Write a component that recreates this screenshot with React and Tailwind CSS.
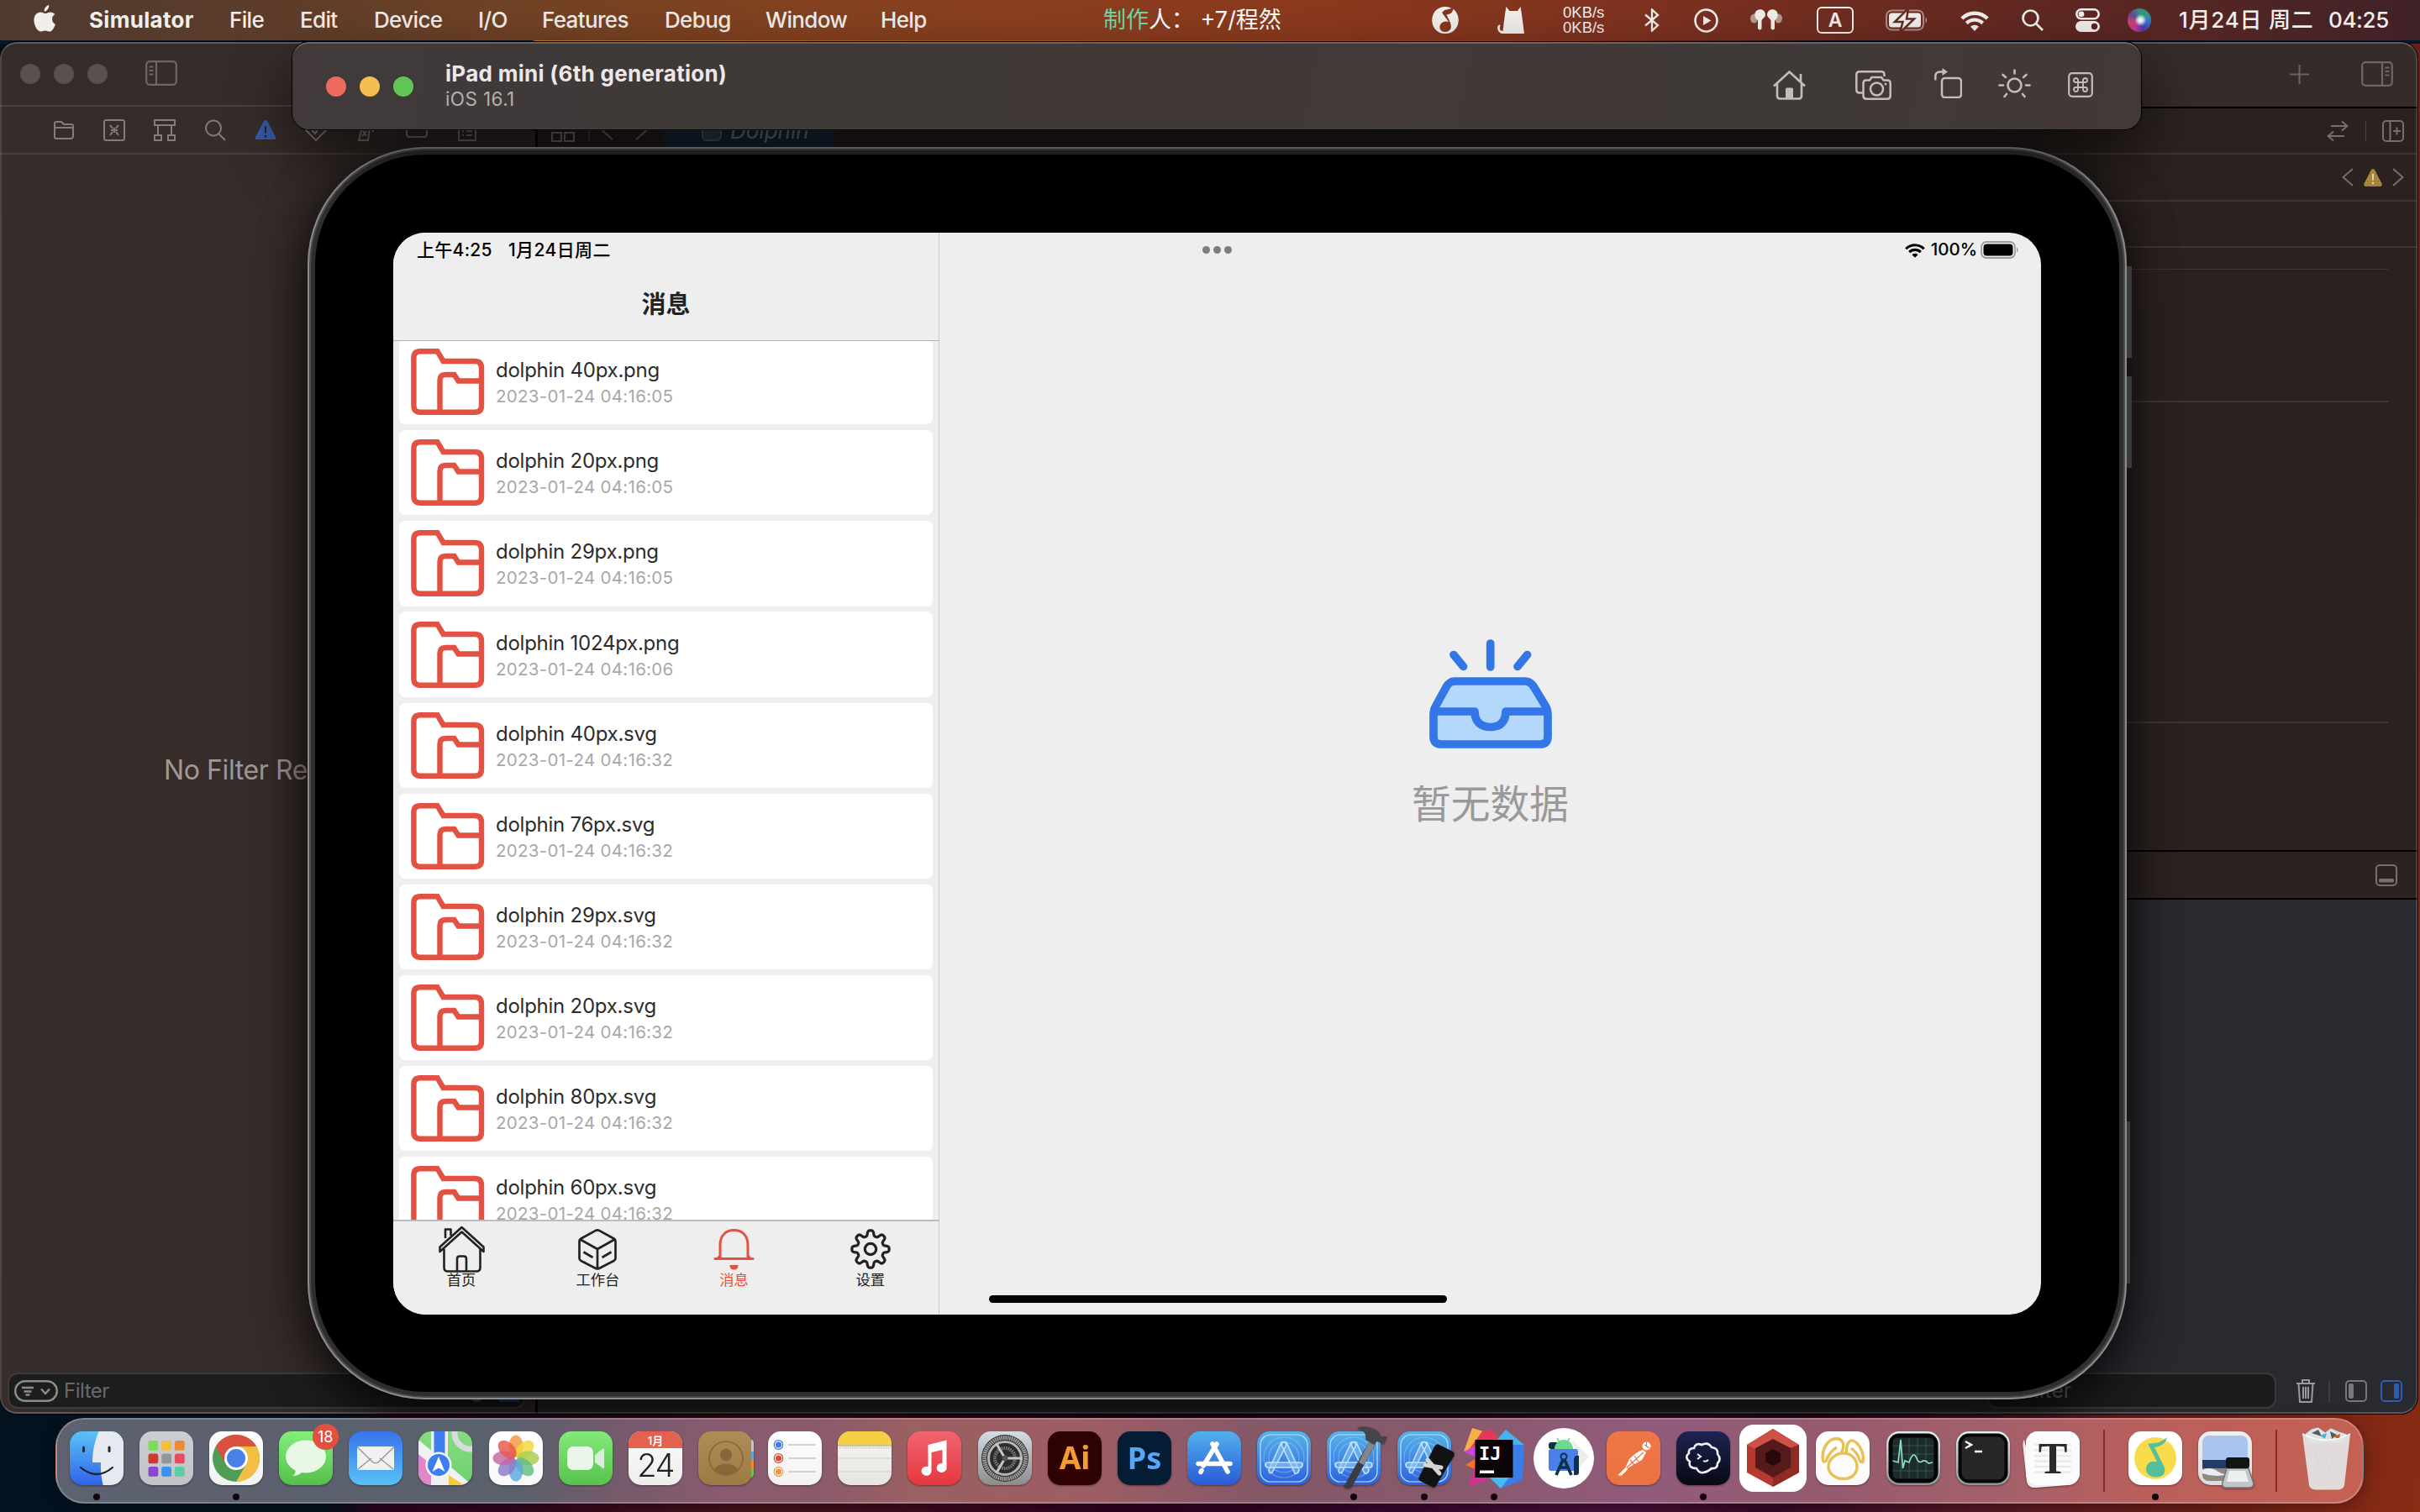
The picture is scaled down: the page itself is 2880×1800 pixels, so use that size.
import React from "react";

/* ---------- menu bar ---------- */

const menus = [
  ["Simulator", "w-[167px] font-bold tracking-[0.3px]"],
  ["File", "w-[84px]"],
  ["Edit", "w-[88px]"],
  ["Device", "w-[124px]"],
  ["I/O", "w-[76px]"],
  ["Features", "w-[146px]"],
  ["Debug", "w-[120px]"],
  ["Window", "w-[137px]"],
  ["Help", "w-[265px]"],
];

function Wifi({ className }) {
  return (
    <svg viewBox="0 0 34 25" className={className} fill="none" stroke="currentColor" strokeWidth="4.4">
      <path d="M1.8 10 A21.5 21.5 0 0 1 32.2 10" />
      <path d="M7.4 15.6 A13.6 13.6 0 0 1 26.6 15.6" />
      <path d="M17 25 L12 19.8 A7 7 0 0 1 22 19.8 Z" fill="currentColor" stroke="none" />
    </svg>
  );
}

function MenuBar() {
  return (
    <header className="relative flex h-12 items-center bg-[linear-gradient(90deg,#503a31_0%,#5b3c2a_10%,#6f4226_20%,#83421f_32%,#8b3f1f_42%,#8c391d_55%,#7e3220_68%,#682a21_80%,#522524_92%,#3f2128_100%)] text-[26px] font-medium text-[#f1eeec]">
      <svg viewBox="0 0 26 32" className="mb-1 ml-10 h-8 w-[26px]" fill="currentColor">
        <path d="M18.2 0 C18.5 2.3 17.5 4.3 16.3 5.7 C15.1 7.1 13.4 7.9 12.7 7.6 C12.4 5.5 13.4 3.6 14.5 2.3 C15.6 1 17 .2 18.2 0 Z M25.3 11 C23.2 12.4 22 14.4 22.1 16.9 C22.2 19.9 23.9 22 26 22.9 C25.2 25.2 22.4 31.6 19 31.6 C16.9 31.6 16.2 30.4 13.7 30.4 C11.2 30.4 10.3 31.6 8.4 31.6 C4.6 31.6 .4 24.3 .4 18 C.4 11.9 4.3 8.5 8.1 8.5 C10.6 8.5 12 10.1 14 10.1 C15.8 10.1 17.2 8.4 19.9 8.4 C21.9 8.4 24.2 9.5 25.3 11 Z" />
      </svg>
      <nav className="mb-0.5 ml-10 flex tracking-[-0.65px]">
        {menus.map(([label, cls]) => (
          <span key={label} className={cls}>{label}</span>
        ))}
      </nav>
      <div className="w-[391px] text-[27px] font-normal whitespace-nowrap text-white">
        <span className="text-[#6bdba5]">制作</span>人：&nbsp;+7/程然
      </div>
      <svg viewBox="0 0 32 32" className="h-8 w-8" fill="currentColor">
        <path d="M16 0 C19 0 21.5 .7 23.5 2 L15 4 L12 7 L20 18 C14 16 9 20 9.5 25 C10 31 20 32 22.5 26 C24.5 20 18 12 17.5 9.5 C21 9.5 25 7 25.5 2.8 C37 12 32 32 16 32 C-5 32 -5 0 16 0 Z" />
      </svg>
      <svg viewBox="0 0 32 32" className="ml-[46px] h-8 w-8" fill="currentColor">
        <path d="M10.5 0 L14.5 5 H24 L27.5 0 L29 9 L32 32 H5 C-1 30 -1 22 2.5 21.5 C5 22 1.5 24 3.5 28 L6.5 29 L9 9 Z" />
      </svg>
      <div className="ml-[46px] flex w-[97px] flex-col font-['Liberation_Sans'] text-[18.5px] leading-[18px] font-normal">
        <span>0KB/s</span>
        <span>0KB/s</span>
      </div>
      <svg viewBox="0 0 18 28" className="h-7 w-[18px]" fill="none" stroke="currentColor" strokeWidth="2.3">
        <path d="M1 7.5 L16 20 L9 26.5 V1.5 L16 8 L1 20.5" />
      </svg>
      <svg viewBox="0 0 29 29" className="ml-[41px] h-[29px] w-[29px]" fill="none" stroke="currentColor" strokeWidth="2.6">
        <circle cx="14.5" cy="14.5" r="13" />
        <path d="M11 9 L20.5 14.5 L11 20 Z" fill="currentColor" stroke="none" />
      </svg>
      <svg viewBox="0 0 38 26" className="ml-[38px] h-[26px] w-[38px]" fill="currentColor">
        <ellipse cx="4.5" cy="11" rx="4.5" ry="5.5" opacity=".55" />
        <ellipse cx="33.5" cy="11" rx="4.5" ry="5.5" opacity=".55" />
        <path d="M7 2 C12 -2 18 1 18 7 C17.5 10 14 11 13.5 14 V23 Q11 26 9 23 V13 C5 11 4 6 7 2 Z" />
        <path d="M31 2 C26 -2 20 1 20 7 C20.5 10 24 11 24.5 14 V23 Q27 26 29 23 V13 C33 11 34 6 31 2 Z" />
      </svg>
      <div className="ml-[41px] flex h-8 w-11 items-center justify-center rounded-[6px] border-[2.5px] border-current text-[23px] font-semibold">A</div>
      <svg viewBox="0 0 51 26" className="ml-[38px] h-[26px] w-[51px]">
        <rect x="1" y="1.5" width="44" height="23" rx="6.5" fill="none" stroke="#f1eeec" strokeOpacity=".5" strokeWidth="2" />
        <path d="M47.5 9 Q51 13 47.5 17 Z" fill="#f1eeec" fillOpacity=".5" />
        <rect x="4" y="4.5" width="38" height="17" rx="3.5" fill="#f1eeec" />
        <path d="M27 -1 L11 15 H20.5 L17 28 L34 11.5 H25 Z" fill="#f1eeec" stroke="#642a22" strokeWidth="2.5" />
      </svg>
      <Wifi className="ml-[38px] h-[25px] w-[34px]" />
      <svg viewBox="0 0 26 26" className="ml-[39px] h-[26px] w-[26px]" fill="none" stroke="currentColor" strokeWidth="2.7">
        <circle cx="10.5" cy="10.5" r="9" />
        <path d="M17 17 L25 25" />
      </svg>
      <svg viewBox="0 0 29 28" className="ml-[38px] h-7 w-[29px]">
        <rect x="1.3" y="1.3" width="26.4" height="11" rx="5.5" fill="none" stroke="#f1eeec" strokeWidth="2.6" />
        <circle cx="7" cy="6.8" r="3.4" fill="#f1eeec" />
        <rect x="0" y="15" width="29" height="13" rx="6.5" fill="#f1eeec" />
        <circle cx="22.5" cy="21.5" r="3.7" fill="#56261f" />
      </svg>
      <div className="ml-[33px] h-7 w-7 rounded-full bg-[radial-gradient(circle_at_55%_50%,#fff_0%,#cfe4ee_14%,transparent_34%),conic-gradient(from_0deg,#3b8f74,#2c9c8a,#3a6fd0,#4a3aa8,#b53a90,#d1406f,#5a4a9a,#3b8f74)]" />
      <div className="mb-0.5 ml-[33px] flex whitespace-nowrap">
        <span className="w-[178px] tracking-[0.75px]">1月24日 周二</span>
        <span className="tracking-[-0.4px]">04:25</span>
      </div>
    </header>
  );
}

/* ---------- Xcode window behind the simulator ---------- */

function PanelIcon({ side }) {
  return (
    <svg viewBox="0 0 38 30" className="h-[30px] w-[38px]" fill="none" stroke="#6f6765" strokeWidth="2.2">
      <rect x="1.2" y="1.2" width="35.6" height="27.6" rx="4" />
      {side === "left" ? (
        <path d="M13 1 V29 M4.5 7.5 H9.5 M4.5 12 H9.5 M4.5 16.5 H9.5" />
      ) : (
        <path d="M25 1 V29 M28.5 7.5 H33.5 M28.5 12 H33.5 M28.5 16.5 H33.5" />
      )}
    </svg>
  );
}

const navIcons = [
  <path d="M2 22 V5 Q2 3 4 3 H10 L13 6 H22 Q24 6 24 8 V20 Q24 23 21 23 H4 Q2 23 2 21 M2 10 H24" />,
  <path d="M1 3 Q1 1 3 1 H23 Q25 1 25 3 V23 Q25 25 23 25 H3 Q1 25 1 23 Z M8 7 L11 11 M18 7 L15 11 M8 19 L11 15 M18 19 L15 15 M9 13 H17 M13 10 V16" />,
  <path d="M1 1 H25 V7 H1 Z M5 7 V19 M21 7 V19 M1 19 H9 V25 H1 Z M17 19 H25 V25 H17 Z" />,
  <path d="M20 10.5 A9 9 0 1 1 2 10.5 A9 9 0 1 1 20 10.5 M17 17 L25 25" />,
  <g stroke="none">
    <path d="M13 1 Q14.5 1 15.5 3 L25 21 Q26 24 23.5 24 H2.5 Q0 24 1 21 L10.5 3 Q11.5 1 13 1 Z" fill="#3459a4" />
    <path d="M11.8 8 H14.2 L13.8 17 H12.2 Z M11.7 19 H14.3 V21.5 H11.7 Z" fill="#2a2425" />
  </g>,
  <path d="M13 1 L25 13 L13 25 L1 13 Z M8 13 L12 17 L18 8" />,
  <path d="M8 9 H17 L15 25 H4 Z M10 9 V3 H16 M9 14 L13 20 M13 14 L8 20 M20 6 H22 M24 10 H26 M20 14 H22" />,
  <path d="M1 5 H25 V18 Q25 21 22 21 H4 Q1 21 1 18 Z" />,
  <path d="M3 1 H23 V25 H3 Z M7 8 H9 M12 8 H19 M7 14 H9 M12 14 H19 M7 19 H9 M12 19 H19" />,
];

function Chevron({ dir }) {
  return (
    <svg viewBox="0 0 14 22" className="h-[22px] w-[14px]" fill="none" stroke="#766f6d" strokeWidth="2">
      {dir === "left" ? <path d="M13 1 L1.5 11 L13 21" /> : <path d="M1 1 L12.5 11 L1 21" />}
    </svg>
  );
}

function XcodeWindow() {
  return (
    <section className="absolute top-[50px] left-0 flex h-[1633px] w-[2877px] overflow-hidden rounded-[20px] bg-[#2b2220] ring-1 ring-black">
      <aside className="flex w-[637px] flex-col bg-[#362c2a]">
        <div className="flex h-[77px] items-center border-b-2 border-[#4b403e] pl-6">
          <div className="flex gap-4">
            <i className="h-6 w-6 rounded-full bg-[#5a504e]" />
            <i className="h-6 w-6 rounded-full bg-[#5a504e]" />
            <i className="h-6 w-6 rounded-full bg-[#5a504e]" />
          </div>
          <div className="mb-0.5 ml-[45px]">
            <PanelIcon side="left" />
          </div>
        </div>
        <div className="flex h-[57px] items-center gap-[34px] border-b-2 border-[#4b403e] pl-[63px]">
          {navIcons.map((g, i) => (
            <svg key={i} viewBox="0 0 26 26" className="h-[26px] w-[26px] shrink-0" fill="none" stroke="#857c7a" strokeWidth="2">
              {g}
            </svg>
          ))}
        </div>
        <div className="flex h-[1450px] items-center pl-[195px]">
          <span className="mt-[16px] text-[32px] tracking-[-0.4px] whitespace-nowrap text-[#a09896]">No Filter Results</span>
        </div>
        <div className="ml-[9px] flex h-[43px] w-[616px] items-center rounded-[12px] border-2 border-[#403c3b] bg-[#1d1d1d] pl-1.5">
          <svg viewBox="0 0 52 26" className="h-[26px] w-[52px]" fill="none" stroke="#8d8d8d" strokeWidth="2.4">
            <rect x="1.2" y="1.2" width="49.6" height="23.6" rx="11.8" />
            <path d="M9 9 H23 M11.5 13.5 H20.5 M13.5 17.5 H18.5 M32 10.5 L37 16 L42 10.5" />
          </svg>
          <span className="ml-[7px] text-[24px] tracking-[-0.5px] text-[#6a6a6a]">Filter</span>
          <i className="mt-3 ml-[430px] h-3.5 w-3.5 rounded-full bg-[#555]" />
          <i className="mt-3 ml-5 h-3.5 w-6 bg-[#243f7c]" />
        </div>
      </aside>
      <i className="w-[3px] bg-black" />
      <main className="flex flex-1 flex-col">
        <div className="flex h-[79px] items-center justify-end border-b-2 border-black bg-[#352b29] pr-[29px]">
          <svg viewBox="0 0 22 22" className="h-[23px] w-[23px]" stroke="#6b6361" strokeWidth="2">
            <path d="M11 0 V22 M0 11 H22" />
          </svg>
          <div className="mb-0.5 ml-[62px]">
            <PanelIcon side="right" />
          </div>
        </div>
        <div className="flex h-[55px] items-center border-b-2 border-[#403634] pl-4">
          <svg viewBox="0 0 28 26" className="h-[26px] w-7" fill="none" stroke="#857c7a" strokeWidth="2">
            <path d="M1 1 H12 V11 H1 Z M16 1 H27 V11 H16 Z M1 15 H12 V25 H1 Z M16 15 H27 V25 H16 Z" />
          </svg>
          <i className="ml-4 h-6 w-[2px] bg-[#4b403e]" />
          <div className="ml-[14px] flex gap-[26px]">
            <Chevron dir="left" />
            <Chevron dir="right" />
          </div>
          <div className="ml-[19px] flex h-[55px] w-[204px] items-center bg-[#1a2b41] pl-[46px] text-[26px] text-[#81868d] italic">
            <i className="mr-2.5 h-6 w-6 rounded-md border-2 border-[#5d6670] bg-[#3a4450]" />
            Dolphin
          </div>
          <svg viewBox="0 0 26 26" className="ml-auto h-[26px] w-[26px]" fill="none" stroke="#766f6d" strokeWidth="2">
            <path d="M5 7 H24 M18 1.5 L24.5 7 L18 12.5 M21 19 H2 M8 13.5 L1.5 19 L8 24.5" />
          </svg>
          <i className="ml-5 h-6 w-px bg-[#4b4341]" />
          <svg viewBox="0 0 26 26" className="mr-[16px] ml-[19px] h-[26px] w-[26px]" fill="none" stroke="#766f6d" strokeWidth="2">
            <rect x="1" y="1" width="24" height="24" rx="4" />
            <path d="M9.5 1 V25 M13 13 H22 M17.5 8.5 V17.5" />
          </svg>
        </div>
        <div className="flex h-14 items-center justify-end gap-3 border-b-2 border-[#403634] pr-4">
          <Chevron dir="left" />
          <svg viewBox="0 0 22 21" className="h-[21px] w-[22px]">
            <path d="M11 0 Q12.5 0 13.5 2 L21.5 17.5 Q22.5 21 19.5 21 H2.5 Q-.5 21 .5 17.5 L8.5 2 Q9.5 0 11 0 Z" fill="#a8833a" />
            <path d="M10 6 H12 L11.7 14 H10.3 Z M10 16 H12 V18 H10 Z" fill="#e6dccb" />
          </svg>
          <Chevron dir="right" />
        </div>
        <div className="h-[55px] border-b-2 border-[#403634]" />
        <div className="mr-[35px] h-[26px] border-b border-[#403634]" />
        <div className="mr-[35px] h-[158px] border-b-2 border-[#403634]" />
        <div className="mr-[35px] h-[382px] border-b-2 border-[#403634]" />
        <div className="h-[151px]" />
        <div className="flex h-[59px] items-center justify-end border-y-2 border-black bg-[#2c2221] pr-[24px]">
          <svg viewBox="0 0 26 26" className="h-[26px] w-[26px]" fill="none" stroke="#766f6d" strokeWidth="2">
            <rect x="1" y="1" width="24" height="24" rx="4" />
            <rect x="4" y="17" width="18" height="4.5" rx="1.5" fill="#766f6d" stroke="none" />
          </svg>
        </div>
        <div className="flex flex-1 items-end justify-end bg-[#292a2f] pr-[18px] pb-1.5">
          <div className="mr-[24px] flex h-[43px] w-[344px] items-center rounded-[12px] border-2 border-[#3a3a3c] bg-[#1c1c1c] pl-[12px] text-[25px] text-[#6a6a6a]">
            <i className="mr-[7px] h-5 w-5 rounded-full border-2 border-[#6a6a6a]" />
            Filter
          </div>
          <svg viewBox="0 0 22 28" className="mb-[7px] h-7 w-[22px]" fill="none" stroke="#9a9a9c" strokeWidth="2">
            <path d="M0 5 H22 M7 5 V1 H15 V5 M2.5 5 L4 27 H18 L19.5 5 M8 9 V23 M11 9 V23 M14 9 V23" />
          </svg>
          <i className="mb-2 ml-4 h-[25px] w-0.5 bg-[#3c3d42]" />
          <svg viewBox="0 0 26 26" className="mb-2 ml-[18px] h-[26px] w-[26px]" fill="none" stroke="#77787b" strokeWidth="2">
            <rect x="1" y="1" width="24" height="24" rx="4" />
            <rect x="4" y="4" width="6" height="18" rx="2" fill="#77787b" stroke="none" />
          </svg>
          <svg viewBox="0 0 26 26" className="mb-2 ml-4 h-[26px] w-[26px]" fill="none" stroke="#2f5cb0" strokeWidth="2">
            <rect x="1" y="1" width="24" height="24" rx="4" />
            <rect x="16" y="4" width="6" height="18" rx="2" fill="#2f5cb0" stroke="none" />
          </svg>
        </div>
      </main>
      <div className="pointer-events-none absolute inset-0 rounded-[20px] border-2 border-[#ffffff38] border-x-[#ffffff20]" />
    </section>
  );
}

/* ---------- simulator title bar ---------- */

function SimulatorBar() {
  return (
    <section className="absolute top-[50px] left-[348px] flex h-[104px] w-[2200px] items-center rounded-[20px] border-t-2 border-[#6a6462] bg-[linear-gradient(100deg,#41393a_0%,#3f3938_30%,#423938_60%,#3f3a37_80%,#433937_100%)] pl-10 shadow-[0_30px_70px_rgba(0,0,0,0.6),0_0_0_1px_#000]">
      <div className="flex gap-4">
        <i className="h-6 w-6 rounded-full bg-[#ed6a5e]" />
        <i className="h-6 w-6 rounded-full bg-[#f5bf4f]" />
        <i className="h-6 w-6 rounded-full bg-[#61c554]" />
      </div>
      <div className="ml-[38px] flex flex-col whitespace-nowrap">
        <span className="text-[26px] leading-[30px] font-bold tracking-[0.3px] text-[#ebe8e7]">iPad mini (6th generation)</span>
        <span className="text-[22.5px] leading-[30px] tracking-[0.4px] text-[#b5afad]">iOS 16.1</span>
      </div>
      <div className="mr-[57px] mb-1 ml-auto flex items-center text-[#c4bdbb]">
        <svg viewBox="0 0 39 35" className="h-[35px] w-[39px]" fill="none" stroke="currentColor" strokeWidth="2.6">
          <path d="M1 18.5 L19.5 1.5 L38 18.5 M5 15 V30 Q5 33.5 8.5 33.5 H30.5 Q34 33.5 34 30 V15 M33 14 V4" />
          <path d="M15 33 V22 Q15 20.5 16.5 20.5 H22.5 Q24 20.5 24 22 V33 Z" fill="currentColor" stroke="none" />
        </svg>
        <svg viewBox="0 0 43 35" className="ml-[59px] h-[35px] w-[43px]" fill="none" stroke="currentColor" strokeWidth="2.5">
          <path d="M9 26.5 H5 Q1.3 26.5 1.3 22.5 V5 Q1.3 1.3 5 1.3 H31 Q34.5 1.3 34.5 5 V7" />
          <path d="M13 11.5 H17 L19.5 8 H31 L33.5 11.5 H38 Q41.7 11.5 41.7 15 V30 Q41.7 33.7 38 33.7 H13 Q9.5 33.7 9.5 30 V15 Q9.5 11.5 13 11.5 Z" />
          <circle cx="25.5" cy="22" r="7.5" />
          <circle cx="36" cy="16" r="1.5" fill="currentColor" stroke="none" />
        </svg>
        <svg viewBox="0 0 33 36" className="mb-1 ml-[51px] h-9 w-[33px]" fill="none" stroke="currentColor" strokeWidth="2.5">
          <rect x="9" y="12" width="23" height="23" rx="3.5" />
          <path d="M1.3 14.5 V10 Q1.3 4.5 7 4.5 H13" />
          <path d="M9.5 0 L16 4.5 L9.500 9 Z" fill="currentColor" stroke="none" />
        </svg>
        <svg viewBox="0 0 39 35" className="mb-1 ml-[43px] h-[35px] w-[39px]" fill="none" stroke="currentColor" strokeWidth="2.6" strokeLinecap="round">
          <circle cx="19.5" cy="19.5" r="8" />
          <path d="M19.5 1.5 V5.5 M1.5 19.5 H6 M33 19.5 H37.5 M5.5 7 L9 10 M33.5 7 L30 10 M7.5 33 L10 30 M31.5 33 L29 30" />
        </svg>
        <svg viewBox="0 0 30 30" className="ml-11 h-[30px] w-[30px]" fill="none" stroke="currentColor" strokeWidth="2.2">
          <rect x="1.2" y="1.2" width="27.6" height="27.6" rx="4" />
          <path d="M12 12 H18 V18 H12 Z M12 12 V9.500 A2.5 2.5 0 1 0 9.500 12 H12 M18 12 V9.500 A2.5 2.5 0 1 1 20.5 12 H18 M12 18 V20.5 A2.5 2.5 0 1 1 9.5 18 H12 M18 18 V20.5 A2.5 2.5 0 1 0 20.5 18 H18" strokeWidth="1.9" />
        </svg>
      </div>
    </section>
  );
}

/* ---------- app running in the iPad ---------- */

const files = [
  ["dolphin 40px.png", "2023-01-24 04:16:05"],
  ["dolphin 20px.png", "2023-01-24 04:16:05"],
  ["dolphin 29px.png", "2023-01-24 04:16:05"],
  ["dolphin 1024px.png", "2023-01-24 04:16:06"],
  ["dolphin 40px.svg", "2023-01-24 04:16:32"],
  ["dolphin 76px.svg", "2023-01-24 04:16:32"],
  ["dolphin 29px.svg", "2023-01-24 04:16:32"],
  ["dolphin 20px.svg", "2023-01-24 04:16:32"],
  ["dolphin 80px.svg", "2023-01-24 04:16:32"],
  ["dolphin 60px.svg", "2023-01-24 04:16:32"],
];

function FolderIcon() {
  return (
    <svg viewBox="0 0 88 79" className="h-[79px] w-[88px] shrink-0" fill="none" stroke="#e25141" strokeWidth="6.4">
      <path d="M3.4 11 Q3.4 3.2 11 3.2 H31.5 L38.5 15 H76 Q84 15 84 23 V68 Q84 75.8 76 75.8 H11 Q3.4 75.8 3.4 68 Z" />
      <path d="M34.5 75 V38 Q34.5 31 41 31 H51.5 L56.5 38.5 H84" />
    </svg>
  );
}

const gearPath = (() => {
  const pts = [];
  for (let i = 0; i < 240; i++) {
    const a = (i / 240) * Math.PI * 2;
    const r = 19 + 3.3 * Math.tanh(1.9 * Math.cos(8 * a));
    pts.push(`${(24 + r * Math.sin(a)).toFixed(2)} ${(24 - r * Math.cos(a)).toFixed(2)}`);
  }
  return `M${pts.join(" L")} Z`;
})();

const tabs = [
  [
    "首页",
    <svg viewBox="0 0 55 56" className="mt-[5px] h-[56px] w-[55px]" fill="none" stroke="currentColor" strokeWidth="2.6" strokeLinejoin="round">
      <path d="M8 15 V4.5 H14.5 V12" />
      <path d="M27.5 2 L53.5 25.5 V31 L27.5 7.5 L1.5 31 V25.5 Z" />
      <path d="M6.5 28 V50 Q6.5 54.500 11 54.500 H45 Q49.5 54.500 49.5 50 V28" />
      <path d="M22 54 V39.5 Q22 36.5 25 36.5 H30 Q33 36.5 33 39.5 V54" />
    </svg>,
  ],
  [
    "工作台",
    <svg viewBox="0 0 46 49" className="mt-[9px] mb-[3px] h-[49px] w-[46px]" fill="none" stroke="currentColor" strokeWidth="2.7" strokeLinejoin="round">
      <path d="M21 1.9 Q23 1 25 1.9 L42.5 11.5 Q44.5 12.5 44.5 14.5 V35 Q44.5 37 42.5 38 L25 47 Q23 48 21 47 L3.5 38 Q1.5 37 1.5 35 V14.5 Q1.5 12.5 3.5 11.5 Z M2.5 12.5 L23 24 L43.5 12.5 M23 24 V47.5 M6.5 27.5 L17.5 34 M28.5 34 L39.5 27.5" />
    </svg>,
  ],
  [
    "消息",
    <svg viewBox="0 0 49 49" className="mt-[9px] mb-[3px] h-[49px] w-[49px]" fill="none" stroke="currentColor" strokeWidth="3" strokeLinecap="round">
      <path d="M2 35.5 H47 M8 34 V19 C8 8 14.5 1.6 24.5 1.6 C34.5 1.6 41 8 41 19 V34 M8 32 L5.5 35 M41 32 L43.5 35" />
      <path d="M19.5 43 H29.5 Q29.5 48.5 24.5 48.5 Q19.5 48.5 19.5 43 Z" fill="currentColor" stroke="none" />
    </svg>,
  ],
  [
    "设置",
    <svg viewBox="0 0 48 48" className="mt-[9px] mb-[4px] h-[48px] w-[48px]" fill="none" stroke="currentColor" strokeWidth="3.2">
      <path d={gearPath} />
      <circle cx="24" cy="24" r="6.7" />
    </svg>,
  ],
];

function Sidebar() {
  return (
    <aside className="flex w-[650px] flex-col border-r border-[#c9c9c9]">
      <header className="relative z-10 flex h-[129px] flex-col border-b border-[#b4b4b4] bg-[#eeeeee]">
        <div className="flex h-[41px] items-center pl-[28px] font-medium whitespace-nowrap text-black">
          <span className="w-[109px] text-[21px] tracking-[0.3px]">上午4:25</span>
          <span className="text-[21px] tracking-[0.4px]">1月24日周二</span>
        </div>
        <h1 className="mt-[23px] text-center text-[29px] leading-[44px] font-bold text-[#222]">消息</h1>
      </header>
      <ul className="-mt-0.5 flex h-[1048px] flex-col gap-[6.9px] overflow-hidden px-[7px]">
        {files.map(([name, date], i) => (
          <li key={i} className="flex h-[101.25px] shrink-0 items-center rounded-[7px] bg-white pl-[13.5px]">
            <FolderIcon />
            <div className="ml-[13.5px] flex flex-col pt-[3px]">
              <span className="text-[24px] leading-[31px] tracking-[-0.25px] text-[#2c2c2c]">{name}</span>
              <span className="text-[20.5px] leading-[31px] tracking-[0.3px] text-[#a8a8a8]">{date}</span>
            </div>
          </li>
        ))}
      </ul>
      <nav className="relative z-10 flex flex-1 border-t-2 border-[#bdbdbd] bg-[#eeeeee]">
        {tabs.map(([label, icon]) => (
          <div key={label} className={label === "消息" ? "flex flex-1 flex-col items-center text-[#e25141]" : "flex flex-1 flex-col items-center text-[#222]"}>
            {icon}
            <span className="-mt-px text-[17.3px] leading-[20px]">{label}</span>
          </div>
        ))}
      </nav>
    </aside>
  );
}

function EmptyPane() {
  return (
    <main className="flex flex-1 flex-col">
      <div className="flex h-[41px] items-center">
        <div className="flex gap-1 pl-[313px]">
          <i className="h-[9px] w-[9px] rounded-full bg-[#7d7d7d]" />
          <i className="h-[9px] w-[9px] rounded-full bg-[#7d7d7d]" />
          <i className="h-[9px] w-[9px] rounded-full bg-[#7d7d7d]" />
        </div>
        <div className="mr-[26px] ml-auto flex items-center text-[20.5px] font-medium text-black">
          <Wifi className="h-[18px] w-[24px]" />
          <span className="ml-[7px]">100%</span>
          <svg viewBox="0 0 46 21" className="ml-[4px] h-[21px] w-[46px]">
            <rect x="1" y="1" width="40" height="19" rx="6" fill="none" stroke="#9c9c9c" strokeWidth="1.8" />
            <rect x="3.5" y="3.5" width="35" height="14" rx="4" fill="#000" />
            <path d="M43 7.5 Q46.5 10.5 43 13.5 Z" fill="#9c9c9c" />
          </svg>
        </div>
      </div>
      <div className="flex h-[1224px] flex-col items-center pt-[443px]">
        <svg viewBox="0 0 146 130" className="h-[130px] w-[146px]" fill="none" stroke="#3376e8" strokeWidth="9.7" strokeLinecap="round" strokeLinejoin="round">
          <path d="M30 50 H114 Q120 50 124 56 L138 79 Q141 84 141 90 V116 Q141 125 132 125 H14 Q5 125 5 116 V90 Q5 84 8 79 L20 57 Q24 50 30 50 Z" fill="#b4d7fc" />
          <path d="M8 86 H54 C54 99 62 104.5 73 104.5 C84 104.5 91 99 91 86 H138" />
          <path d="M72.7 5 V33 M29 18.5 L40.5 32.5 M116.5 18.5 L105 32.5" />
        </svg>
        <p className="mt-[29px] text-[46.7px] leading-[74px] text-[#999]">暂无数据</p>
      </div>
      <div className="ml-[59px] h-[9px] w-[545px] rounded-full bg-black" />
    </main>
  );
}

function Device() {
  return (
    <section className="absolute top-[175px] left-[366px] flex h-[1491px] w-[2165px] rounded-[140px] bg-[#2e2e2e] p-[9px] shadow-[0_20px_60px_rgba(0,0,0,0.7),0_0_60px_rgba(0,0,0,0.35),inset_0_0_0_2px_#8b8b8b,inset_0_0_0_4px_#4a4a4a]">
      <i className="absolute top-[142px] -right-[6px] h-[109px] w-[6px] bg-[#3b3b3b]" />
      <i className="absolute top-[273px] -right-[6px] h-[109px] w-[6px] bg-[#3b3b3b]" />
      <i className="absolute top-[1160px] -right-[4px] h-[193px] w-[4px] bg-[#3b3b3b]" />
      <div className="flex flex-1 rounded-[131px] bg-black px-[93px] py-[93px]">
        <div className="flex h-[1288px] w-[1961px] overflow-hidden rounded-[38px] bg-[#eeeeee]">
          <Sidebar />
          <EmptyPane />
        </div>
      </div>
    </section>
  );
}

/* ---------- dock ---------- */

function Tile({ id, from, to, children, clip = true }) {
  return (
    <svg viewBox="0 0 64 64" className="h-16 w-16 overflow-visible drop-shadow-[0_1px_1px_rgba(0,0,0,0.4)]">
      <defs>
        <linearGradient id={"g" + id} x1="0" y1="0" x2="0" y2="1">
          <stop offset="0" stopColor={from} />
          <stop offset="1" stopColor={to} />
        </linearGradient>
        <clipPath id={"c" + id}>
          <rect width="64" height="64" rx="15" />
        </clipPath>
      </defs>
      <rect width="64" height="64" rx="15" fill={`url(#g${id})`} />
      <g clipPath={clip ? `url(#c${id})` : undefined}>{children}</g>
    </svg>
  );
}

function Blueprint({ id, children }) {
  return (
    <Tile id={id} from="#56b4ea" to="#2d60dc" clip={false}>
      <g fill="none" stroke="#bfe2fb" strokeWidth="1.2">
        <rect x="4" y="4" width="56" height="56" rx="12" />
        <circle cx="32" cy="31" r="24" opacity=".35" />
        <circle cx="32" cy="31" r="18" opacity=".35" />
        <path d="M35 13 L50 46 Q49 51 45 50 L29 16 Q30 11 35 13 Z M29 13 L14 46 Q14 51 18 49 L35 16 Q33 11 29 13 Z" fill="#8fc6f3" fillOpacity=".5" strokeWidth="1.6" />
        <rect x="10" y="37" width="44" height="6" rx="3" fill="#8fc6f3" fillOpacity=".6" strokeWidth="1.6" />
      </g>
      {children}
    </Tile>
  );
}

const petals = ["#f29a38", "#f1d53c", "#a8cd4c", "#62bd7c", "#5ba8e0", "#8a7cc6", "#c266a4", "#e8574a"];
const launch = ["#79dd55", "#f5bd3e", "#ec8a35", "#cf3a2c", "#8f999c", "#e94a60", "#8a48d0", "#3a93ef", "#5fcca5"];

const dockApps = [
  { dot: true, icon: (
    <Tile id="finder" from="#5ac3f7" to="#2f62e6">
      <path d="M35 -1 C30 10 27 24 27 37 H37 C36.5 46 37.5 56 40 65 H65 V-1 Z" fill="#e6e9ef" />
      <path d="M16.5 19 V23.5 M47 19 V23.5" stroke="#1d2a3c" strokeWidth="3" strokeLinecap="round" />
      <path d="M13 43 Q32 59 51 43" stroke="#14202e" strokeWidth="2.2" fill="none" strokeLinecap="round" />
    </Tile>) },
  { icon: (
    <Tile id="launch" from="#cdced3" to="#c2c3c8">
      {launch.map((c, i) => (
        <rect key={i} x={10.5 + (i % 3) * 15.7} y={11 + Math.floor(i / 3) * 15.5} width="11.8" height="11.8" rx="2.6" fill={c} />
      ))}
    </Tile>) },
  { dot: true, icon: (
    <Tile id="chrome" from="#fdfdfd" to="#f1f1f1">
      <circle cx="32" cy="32" r="28" fill="#4f9d55" />
      <path d="M7.75 18 A28 28 0 0 1 56.25 18 H32 L20 39 Z" fill="#d9503f" />
      <path d="M56.25 18 A28 28 0 0 1 32 60 L44 39 L32 18 Z" fill="#f3be44" />
      <circle cx="32" cy="32" r="14" fill="#fff" />
      <circle cx="32" cy="32" r="11" fill="#4a80e8" />
    </Tile>) },
  { badge: "18", icon: (
    <Tile id="msg" from="#84ee7b" to="#56bf4b">
      <ellipse cx="32" cy="30" rx="24" ry="19.5" fill="#e9f7e7" />
      <path d="M20 44 Q20 51 16 53 Q24 53 28 48 Z" fill="#e9f7e7" />
    </Tile>) },
  { icon: (
    <Tile id="mail" from="#3873ea" to="#58c1f7">
      <rect x="10" y="18" width="44" height="28" rx="2.5" fill="#f0f0f0" />
      <path d="M11 45 L27 32 M53 45 L37 32 M10.5 19 L28 36 Q32 39.5 36 36 L53.5 19" stroke="#9a9a9a" strokeWidth="1.5" fill="none" />
    </Tile>) },
  { icon: (
    <Tile id="maps" from="#86dc80" to="#6fcf6c">
      <path d="M0 10 L64 64 H36 L0 28 Z" fill="#f0f1f3" />
      <path d="M0 27 L20 44 V64 H0 Z" fill="#df87ca" />
      <path d="M36 52 L54 64 H36 Z" fill="#f5c842" />
      <rect x="15" width="20" height="64" fill="#eef0f4" />
      <rect x="18.5" width="13" height="36" fill="#3c7ff0" />
      <circle cx="62" cy="2" r="19" fill="none" stroke="#d8dade" strokeWidth="7" />
      <circle cx="24" cy="40" r="15.5" fill="#f2f4f8" />
      <circle cx="24" cy="40" r="13" fill="#3b7ef2" />
      <path d="M24 30 L31.5 48 L24 43.5 L16.5 48 Z" fill="#fff" />
    </Tile>) },
  { icon: (
    <Tile id="photos" from="#ffffff" to="#f8f8f8">
      {petals.map((c, i) => (
        <ellipse key={i} cx="32" cy="17.5" rx="8.5" ry="13" fill={c} opacity=".82" transform={`rotate(${i * 45} 32 32)`} />
      ))}
    </Tile>) },
  { icon: (
    <Tile id="ft" from="#82ea79" to="#57c24c">
      <rect x="10" y="18" width="31" height="28" rx="7" fill="#eaf6e9" />
      <path d="M43 28 L52.5 20.5 Q54 20 54 22 V43 Q54 45 52.5 44 L43 37 Z" fill="#d8efd6" />
    </Tile>) },
  { icon: (
    <Tile id="cal" from="#fafafa" to="#efeeec">
      <rect width="64" height="20" fill="#e4604f" />
      <text x="32" y="15.5" textAnchor="middle" fontSize="13" fontWeight="600" fill="#fff" className="font-[Inter,'Noto_Sans_CJK_SC',sans-serif]">1月</text>
      <text x="32" y="54" textAnchor="middle" fontSize="38" fontWeight="300" letterSpacing="-1.5" fill="#222" className="font-[Inter,sans-serif]">24</text>
    </Tile>) },
  { icon: (
    <Tile id="contacts" from="#b08d56" to="#9d7a44" clip={false}>
      <path d="M63 10 Q66 10 66 14 V24 H63 Z" fill="#c8c5bb" />
      <path d="M63 24 H66 V34 H63 Z" fill="#5aa9d6" />
      <path d="M63 34 H66 V45 H63 Z" fill="#e58f35" />
      <path d="M63 45 H66 V52 L63 56 Z" fill="#62c65a" />
      <circle cx="33" cy="32" r="20" fill="none" stroke="#86673a" strokeWidth="1.5" />
      <ellipse cx="33" cy="28" rx="7" ry="7.5" fill="#86673a" />
      <path d="M19 46 Q22 38.5 33 38.5 Q44 38.5 47 46 Q33 58 19 46 Z" fill="#86673a" />
    </Tile>) },
  { icon: (
    <Tile id="rem" from="#ffffff" to="#f3f2f0">
      {["#3a7df0", "#e0483e", "#ee9738"].map((c, i) => (
        <g key={c}>
          <circle cx="12.5" cy={16 + i * 16} r="5.3" fill="#fff" stroke={c} strokeWidth="1.2" />
          <circle cx="12.5" cy={16 + i * 16} r="3.6" fill={c} />
          <path d={`M24 ${16 + i * 16} H57`} stroke="#c4c4c4" strokeWidth="1.6" />
        </g>
      ))}
    </Tile>) },
  { icon: (
    <Tile id="notes" from="#f7f6f4" to="#e6e5e1">
      <rect width="64" height="16.5" fill="#f7cf45" />
      <path d="M0 17 H64" stroke="#a39d8c" strokeWidth="1.2" />
      <path d="M2 19.5 H64" stroke="#bbb" strokeWidth="1.5" strokeDasharray="1 1.5" />
      <path d="M0 32 H64 M0 48 H64" stroke="#cfcecb" strokeWidth="1.2" />
    </Tile>) },
  { icon: (
    <Tile id="music" from="#f0646f" to="#e6373f">
      <path d="M24.500 16 L46.500 10.500 V42.500 A6 5.500 0 1 1 41.500 38 V22 L28.500 25 V47 A6 5.500 0 1 1 24.500 42 Z" fill="#fff" />
    </Tile>) },
  { icon: (
    <Tile id="settings" from="#d3dde4" to="#8b8c8c">
      <circle cx="32" cy="32" r="28" fill="#2c2c2c" />
      <circle cx="32" cy="32" r="24.5" fill="none" stroke="#9d9d9d" strokeWidth="5" strokeDasharray="1.8 .7" />
      <circle cx="32" cy="32" r="19.5" fill="none" stroke="#b5b5b5" strokeWidth="3" />
      <circle cx="32" cy="32" r="12" fill="none" stroke="#777" strokeWidth="4" strokeDasharray="1.6 1" />
      <path d="M32 32 H53 M32 32 L21.5 14 M32 32 L21.5 50" stroke="#c6c6c6" strokeWidth="3" />
      <circle cx="32" cy="32" r="3.5" fill="#555" />
    </Tile>) },
  { icon: (
    <Tile id="ai" from="#2e0200" to="#2e0200">
      <text x="32" y="45" textAnchor="middle" fontSize="37" fontWeight="700" fill="#f39c35" className="font-['Noto_Sans',sans-serif]">Ai</text>
    </Tile>) },
  { icon: (
    <Tile id="ps" from="#051d34" to="#051d34">
      <text x="32" y="45" textAnchor="middle" fontSize="36" fontWeight="700" fill="#56a7f8" className="font-['Noto_Sans',sans-serif]">Ps</text>
    </Tile>) },
  { icon: (
    <Tile id="appstore" from="#51b1ec" to="#2a5ad6">
      <g stroke="#fff" strokeWidth="5.5" strokeLinecap="round">
        <path d="M35 15 L19 41 M30 15 L48 48 M13 38.5 H51 M17 46.5 L16 48.5" />
      </g>
    </Tile>) },
  { icon: <Blueprint id="instr" /> },
  { dot: true, icon: (
    <Blueprint id="xcode">
      <path d="M50 13 L58 15 L30 66 Q26 70 20 66 Z" fill="#3a3c42" />
      <path d="M50 13 L58 15 L44 40 L38 37 Z" fill="#83868c" />
      <path d="M36 -4 Q44 -8 56 -3 Q63 0 64 6 L72 6 L68 15 L60 12 L56 16 L46 10 Q48 0 36 -4 Z" fill="#44464b" />
    </Blueprint>) },
  { dot: true, icon: (
    <Blueprint id="sim">
      <path d="M44 18 Q47 14 50 16 L66 24 Q69 26 67 30 L46 65 Q44 68 41 66 L27 59 Q24 57 26 54 Z" fill="#121212" />
      <path d="M36 34 L50 50 M33 40 L52 43" stroke="#d5d5d5" strokeWidth="5" strokeLinecap="round" />
    </Blueprint>) },
  { dot: true, icon: (
    <svg viewBox="0 0 72 72" className="h-[72px] w-[72px]">
      <path d="M10 0 L30 6 L24 30 L0 28 Z" fill="#f6b047" />
      <path d="M22 4 L34 2 L42 14 L20 30 L6 26 Z" fill="#e5375c" />
      <path d="M0 28 L20 18 L24 40 Z" fill="#c947dd" />
      <path d="M2 44 L18 34 L20 52 Z" fill="#f5712e" />
      <path d="M6 70 L14 44 L36 58 Z" fill="#d42f94" />
      <path d="M50 2 L72 20 L56 40 L36 18 Z" fill="#45b3f2" />
      <path d="M72 20 L70 62 L44 72 L30 58 L56 20 Z" fill="#3a7de8" />
      <path d="M30 58 L56 56 L44 72 Z" fill="#46bdf0" />
      <rect x="13.5" y="14" width="45" height="45" fill="#0c0508" />
      <text x="18" y="38" fontSize="22" fontWeight="700" fill="#fff" className="font-['DejaVu_Sans_Mono']">IJ</text>
      <rect x="19" y="50.5" width="17" height="3.5" fill="#fff" />
    </svg>) },
  { icon: (
    <svg viewBox="0 0 72 72" className="h-[72px] w-[72px]">
      <circle cx="36" cy="36" r="36" fill="#fff" />
      <path d="M46 14 L66 34 L50 52 V30 Z" fill="#ededed" />
      <rect x="18" y="17" width="12" height="8" rx="3" fill="#0d3146" />
      <path d="M25 25 A11 11 0 0 1 47 25 Z" fill="#6fd78f" />
      <path d="M28 12 L31 17 M43 12 L40 17" stroke="#6fd78f" strokeWidth="1.5" />
      <rect x="18" y="25" width="35" height="26" rx="3" fill="#4a80ea" />
      <path d="M50 33 H54 V53 Q54 56 51 56 H48 V36 Z" fill="#0d3146" />
      <circle cx="36" cy="34" r="3.5" fill="none" stroke="#0d3146" strokeWidth="2" />
      <path d="M35 38 L27 56 M37 38 L45 56 M30 47 H42" stroke="#0d3146" strokeWidth="3.6" fill="none" />
    </svg>) },
  { icon: (
    <Tile id="postman" from="#ee7747" to="#ec7340">
      <circle cx="47.5" cy="17.5" r="5" fill="#fff" />
      <path d="M45 16 L51 20 M47.5 12.5 V18" stroke="#ec7340" strokeWidth="1.2" />
      <path d="M43 22 L47 25 L42 34 L21 46 L27 33 Q36 24 43 22 Z" fill="#fff" />
      <path d="M22 44 L14 52 L18 52 L25 45 Z" fill="#fff" stroke="#fff" />
      <path d="M44 25 L24 43 M33 29 L38 36 M28 34 L33 40" stroke="#ec7340" strokeWidth="1.2" />
    </Tile>) },
  { dot: true, icon: (
    <Tile id="term" from="#1e2454" to="#070912">
      <path d="M21 20 Q23 13 30 16 Q38 12 42 19 Q50 20 49 27 Q54 33 49 38 Q49 45 42 44 Q38 48 32 49 Q27 50 24 44 Q14 44 16 36 Q9 31 15 26 Q14 20 21 20 Z" fill="none" stroke="#f2f2f6" strokeWidth="2.6" />
      <path d="M25 27 L29 30 L25 33 M32 35 Q35 37 38 34" fill="none" stroke="#f2f2f6" strokeWidth="2" />
    </Tile>) },
  { icon: (
    <svg viewBox="0 0 80 80" className="h-20 w-20">
      <rect width="80" height="80" rx="17" fill="#fff" />
      <path d="M40 5 L71 24 V57 L40 74 L9 57 V24 Z" fill="#b5392f" />
      <path d="M40 5 L71 24 L58 30 L40 18 L21 30 L9 24 Z" fill="#cd5145" />
      <path d="M40 74 L71 57 V24 L60 28 L60 52 L40 62 Z" fill="#8e2b26" />
      <path d="M40 17 L61 28 V51 L40 63 L19 51 V28 Z" fill="#561a1b" />
      <path d="M40 29 L49 34 V44 L40 49 L31 44 V34 Z" fill="#280a0b" />
    </svg>) },
  { icon: (
    <Tile id="navicat" from="#ffffff" to="#fafafa">
      <g fill="none" stroke="#e8c155" strokeWidth="3.4" strokeLinejoin="round">
        <path d="M33 26 C42 26 49 33 49 42 C49 51 42 56.500 33 56.500 C24 56.500 15 51 15 42 C15 33 24 26 33 26 Z" />
        <path d="M8.500 36 C6 20 15 8.500 25 8.500 C35 10 34 20 29.500 26.500 M8.500 36 C12 37 13 34 14 31 C17 25 20 22 25 19" />
        <path d="M36.500 25 C36 15 40 10 44 11 C52 14 58 27 56 36 C53 38 52 34 51 31 C49 26 46 23 42 20" />
      </g>
    </Tile>) },
  { icon: (
    <Tile id="activity" from="#dff0f2" to="#8f9597">
      <rect x="2.5" y="2.5" width="59" height="59" rx="12.5" fill="#050505" />
      <rect x="7.5" y="7.5" width="49" height="49" rx="5" fill="#1d2b2a" />
      <path d="M7.5 17 H56.5 M7.5 27 H56.5 M7.5 47 H56.5 M17 8 V56 M27 8 V56 M37 8 V56 M47 8 V56" stroke="#345450" strokeWidth="1" />
      <path d="M7.5 35 L14 37 L17 10 L19.5 44 L22 35 L27 37 Q32 22 36 32 Q38 38 42 36 Q46 33 50 38 L55 37" fill="none" stroke="#8ce0c8" strokeWidth="1.7" />
    </Tile>) },
  { icon: (
    <Tile id="terminal" from="#dff0f2" to="#8f9597">
      <rect x="2.5" y="2.5" width="59" height="59" rx="12.5" fill="#050505" />
      <rect x="6.5" y="6.5" width="51" height="51" rx="8" fill="#262626" />
      <path d="M11 12 L18 16 L11 20 M22 24 H31" stroke="#fff" strokeWidth="2.4" fill="none" />
    </Tile>) },
  { icon: (
    <Tile id="typora" from="#ffffff" to="#f6f6f6" clip={false}>
      <path d="M-2 10 Q-4 12 -3.5 18 L1 60 Q3 68 12 67 L50 64 L10 62 Z" fill="#ededed" />
      <rect width="64" height="64" rx="14" fill="#fbfbfb" />
      <path d="M10 16 H54 M10 22.5 H54 M10 29 H54 M10 35.5 H54 M10 42 H54 M10 48.5 H54" stroke="#e9e9e9" strokeWidth="2.5" />
      <text x="32" y="50" textAnchor="middle" fontSize="52" fontWeight="700" fill="#2a2a2a" className="font-['Liberation_Serif']">T</text>
    </Tile>) },
  "sep",
  { dot: true, icon: (
    <Tile id="qq" from="#ffffff" to="#ffffff">
      <ellipse cx="32" cy="32" rx="25" ry="25" fill="#f8dc4b" />
      <path d="M46 7 Q44 17 31 19 L43 43 Q45 54 33 54.5 Q21 54 21 44.5 Q22 34 34 36 L23 14.5 Q38 15 46 7 Z" fill="#55bf9c" />
    </Tile>) },
  { icon: (
    <Tile id="preview" from="#f0f0f2" to="#dcdcde" clip={false}>
      <rect x="5" y="5" width="54" height="54" rx="8" fill="#a9c4ef" />
      <rect x="5" y="34" width="54" height="10" fill="#243a6b" />
      <path d="M5 44 H59 V51 Q59 59 51 59 H13 Q5 59 5 51 Z" fill="#8f8a80" />
      <path d="M5 46 Q14 41 24 48 T40 46 V50 Q22 56 5 50 Z" fill="#e8edf2" />
      <path d="M34 44 H60 L66 62 Q66 67 60 67 H33 Q27 66 29 61 Z" fill="#c3c6c8" stroke="#70757a" strokeWidth="1.5" />
      <path d="M37 47 H56 L60 60 H34 Z" fill="#edf0f1" />
      <rect x="33" y="31" width="28" height="13" rx="3" fill="#141414" />
    </Tile>) },
  "sep",
  { icon: (
    <svg viewBox="0 0 60 76" className="h-[76px] w-[60px]">
      <path d="M4 9 L12 3 L20 1 L28 7 L35 2 L44 6 L54 9 L50 20 H8 Z" fill="#dfe1e1" stroke="#7a7a7a" strokeWidth=".8" />
      <path d="M12 8 L20 4 L24 12 Z M34 6 L42 10 L36 15 Z" fill="#565a5e" />
      <path d="M22 11 L30 8 L28 15 Z" fill="#46b6cf" />
      <path d="M38 12 L46 9 L45 16 Z" fill="#c8602c" />
      <path d="M1 9 Q30 24 58 9 L51 70 Q50 75 43 75.5 H17 Q10 75 9 70 Z" fill="#e3e3e3" fillOpacity=".95" />
      <path d="M1 9 Q30 24 58 9" fill="none" stroke="#fafafa" strokeWidth="1.5" />
      <path d="M16 30 L24 60 M42 28 L34 50 M26 34 L40 64" stroke="#dadad8" strokeWidth="2" />
    </svg>) },
];

function Dock() {
  return (
    <footer className="absolute top-[1688px] left-[66px] flex h-[102px] w-[2747px] rounded-[34px] border-2 border-[#ffffff38] bg-[linear-gradient(90deg,#5d6170_0%,#5b606d_20%,#745a6b_24%,#8a5a70_29%,#8a5a6c_33%,#9a6062_37%,#9d5d64_45%,#855868_52%,#87596b_60%,#915b7b_69%,#955a6e_76%,#a3606b_84%,#b85f5d_90%,#c56152_100%)] pl-[5px] shadow-[0_4px_20px_rgba(0,0,0,0.35)]">
      {dockApps.map((app, i) =>
        app === "sep" ? (
          <div key={i} className="flex w-[38.5px] justify-center pt-3">
            <i className="h-[74px] w-[2px] bg-[#8b2a28]" />
          </div>
        ) : (
          <div key={i} className="relative flex w-[83.16px] flex-col items-center">
            <div className="flex h-[91px] items-center">{app.icon}</div>
            {app.badge && (
              <span className="absolute top-[5px] right-[3px] flex h-[31px] w-[31px] items-center justify-center rounded-full bg-[#e2503f] text-[18px] text-white">{app.badge}</span>
            )}
            {app.dot && <i className="absolute bottom-[2px] h-2 w-2 rounded-full bg-[#120308]" />}
          </div>
        )
      )}
    </footer>
  );
}

export default function App() {
  return (
    <div className="relative h-[1800px] w-[2880px] overflow-hidden bg-[linear-gradient(100deg,#02121f_0%,#03131f_22%,#2c0420_24%,#34081f_30%,#45141a_38%,#3c0a20_45%,#2c0320_52%,#3a0a30_64%,#4a1038_70%,#350a28_76%,#571a26_84%,#6d2018_92%,#8a2c14_100%)] font-[Inter,'Noto_Sans_CJK_SC',sans-serif]">
      <MenuBar />
      <div className="h-1 bg-[linear-gradient(90deg,#03182b_0_22%,#cc7a22_22.1%,#b8531d_40%,#9a3219_65%,#2a1426_74%,#06182e_78%)]" />
      <XcodeWindow />
      <Device />
      <SimulatorBar />
      <Dock />
    </div>
  );
}
